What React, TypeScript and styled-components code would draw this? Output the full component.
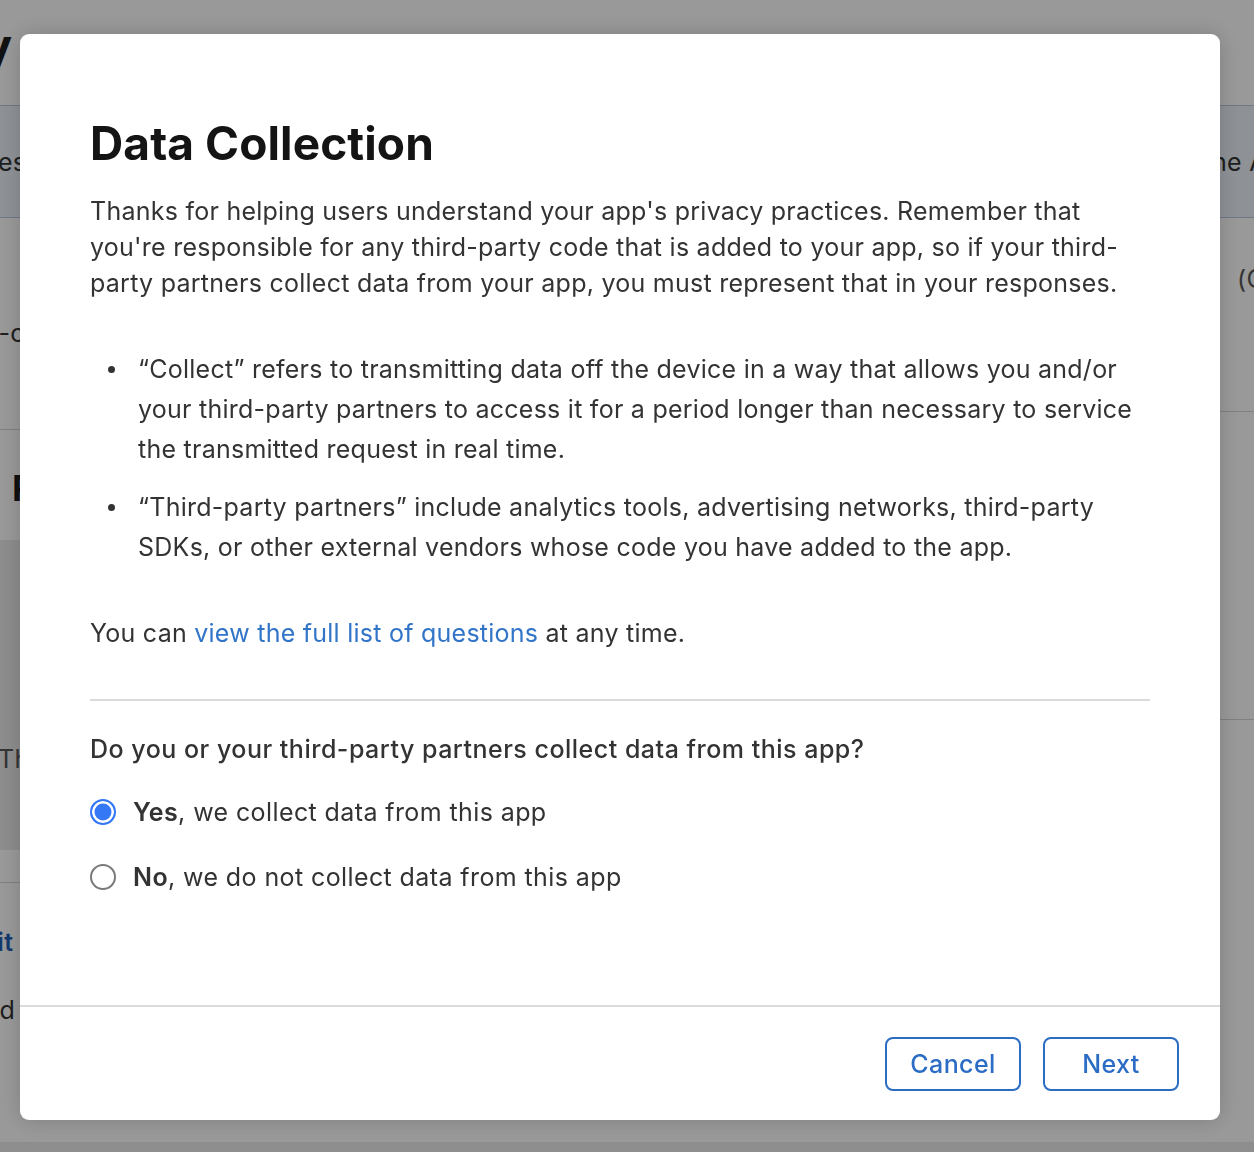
import * as React from "react";
import styled, { createGlobalStyle } from "styled-components";

const GlobalStyle = createGlobalStyle`
  html, body {
    margin: 0;
    padding: 0;
    height: 100%;
    overflow: hidden;
    background: #fff;
  }
  body {
    font-family: Inter, "Noto Sans", "Liberation Sans", sans-serif;
    -webkit-font-smoothing: antialiased;
  }
  * { box-sizing: border-box; }
`;

const App = () => {
  const [collects, setCollects] = React.useState(true);

  return (
    <>
      <GlobalStyle />
      <Page>
        <PageHeader>
          <PageTitle>App Privacy</PageTitle>
        </PageHeader>
        <TableBand>
          <BandLeft>Data Types and Values</BandLeft>
          <BandRight>the App</BandRight>
        </TableBand>
        <PageBody>
          <MainCol>
            <MainRow className="first">
              <RowText>non-consumable</RowText>
            </MainRow>
            <MainRow className="second">
              <SectionHeading>Privacy Policy</SectionHeading>
              <GreyCard>
                <CardText>The app has a policy</CardText>
              </GreyCard>
            </MainRow>
            <MainRow className="third">
              <LinkText>Edit</LinkText>
              <RowText className="small">Updated</RowText>
            </MainRow>
          </MainCol>
          <SideCol>
            <SideBlock className="top">
              <SideText>(Optional)</SideText>
            </SideBlock>
            <SideBlock className="mid" />
          </SideCol>
        </PageBody>
        <PageFooter />
      </Page>

      <Overlay />

      <Modal role="dialog" aria-labelledby="dc-title">
        <ModalBody>
          <Title id="dc-title">Data Collection</Title>
          <Paragraph>
            Thanks for helping users understand your app's privacy practices. Remember that<br />
            you're responsible for any third-party code that is added to your app, so if your third-<br />
            party partners collect data from your app, you must represent that in your responses.
          </Paragraph>
          <BulletList>
            <li>
              “Collect” refers to transmitting data off the device in a way that allows you and/or<br />
              your third-party partners to access it for a period longer than necessary to service<br />
              the transmitted request in real time.
            </li>
            <li>
              “Third-party partners” include analytics tools, advertising networks, third-party<br />
              SDKs, or other external vendors whose code you have added to the app.
            </li>
          </BulletList>
          <Paragraph>
            You can <a href="#">view the full list of questions</a> at any time.
          </Paragraph>
          <Divider />
          <Question>Do you or your third-party partners collect data from this app?</Question>
          <RadioGroup>
            <RadioRow onClick={() => setCollects(true)}>
              <Radio $checked={collects} />
              <span><b>Yes</b>, we collect data from this app</span>
            </RadioRow>
            <RadioRow onClick={() => setCollects(false)}>
              <Radio $checked={!collects} />
              <span><b>No</b>, we do not collect data from this app</span>
            </RadioRow>
          </RadioGroup>
        </ModalBody>
        <ModalFooter>
          <OutlineButton>Cancel</OutlineButton>
          <OutlineButton>Next</OutlineButton>
        </ModalFooter>
      </Modal>
    </>
  );
};

export default App;

/* ---------- page behind the dialog ---------- */

const Page = styled.div`
  width: 100%;
  height: 1152px;
  display: flex;
  flex-direction: column;
  overflow: hidden;
  color: #1d1d1f;
  font-size: 25px;
  letter-spacing: 0.3px;
`;

const PageHeader = styled.div`
  height: 105px;
  padding-top: 22px;
`;

const PageTitle = styled.h1`
  margin: 0 0 0 -272px;
  font-size: 48px;
  line-height: 48px;
  font-weight: 700;
  letter-spacing: 0;
  white-space: nowrap;
`;

const TableBand = styled.div`
  height: 113px;
  flex-shrink: 0;
  display: flex;
  justify-content: space-between;
  align-items: center;
  background: #edf3fa;
  border-top: 1px solid #b9c9dc;
  border-bottom: 1px solid #b9c9dc;
  color: #333;
  white-space: nowrap;
  overflow: hidden;
`;

const BandLeft = styled.span`
  margin-left: -250px;
`;

const BandRight = styled.span`
  margin-right: -44px;
`;

const PageBody = styled.div`
  flex: 1;
  display: flex;
`;

const MainCol = styled.div`
  flex: 1;
  display: flex;
  flex-direction: column;
`;

const MainRow = styled.div`
  border-bottom: 1px solid #d5d5d5;
  &.first {
    height: 212px;
    padding-top: 100px;
  }
  &.second {
    height: 453px;
    padding-top: 36px;
  }
  &.third {
    flex: 1;
    border-bottom: 0;
    padding-top: 44px;
  }
`;

const RowText = styled.div`
  margin-left: -47px;
  color: #333;
  white-space: nowrap;
  &.small {
    margin-left: -88px;
    margin-top: 38px;
  }
`;

const SectionHeading = styled.div`
  margin-left: 12px;
  font-size: 36px;
  font-weight: 700;
  letter-spacing: 0;
  white-space: nowrap;
`;

const GreyCard = styled.div`
  margin: 30px 0 0 -40px;
  height: 310px;
  background: #ebebeb;
  padding-top: 204px;
`;

const CardText = styled.div`
  margin-left: 38px;
  color: #555;
  white-space: nowrap;
`;

const LinkText = styled.div`
  margin-left: -34px;
  font-weight: 600;
  color: #1f5fb8;
`;

const SideCol = styled.div`
  width: 320px;
  display: flex;
  flex-direction: column;
`;

const SideBlock = styled.div`
  border-bottom: 1px solid #d5d5d5;
  &.top {
    height: 194px;
    padding: 46px 0 0 303px;
  }
  &.mid {
    height: 308px;
  }
`;

const SideText = styled.div`
  color: #555;
  white-space: nowrap;
`;

const PageFooter = styled.div`
  height: 10px;
  flex-shrink: 0;
  background: #ededed;
`;

/* ---------- dialog ---------- */

const Overlay = styled.div`
  position: fixed;
  inset: 0;
  background: rgba(0, 0, 0, 0.4);
`;

const Modal = styled.div`
  position: fixed;
  left: 20px;
  top: 34px;
  width: 1200px;
  height: 1086px;
  display: flex;
  flex-direction: column;
  background: #fff;
  border-radius: 9px;
  box-shadow: 0 0 22px rgba(0, 0, 0, 0.18);
  color: #333;
  font-size: 25px;
  letter-spacing: 0.25px;
`;

const ModalBody = styled.div`
  flex: 1;
  padding: 81px 70px 0 70px;
`;

const Title = styled.h2`
  margin: 0 0 22px;
  font-size: 46px;
  line-height: 56px;
  font-weight: 700;
  letter-spacing: 0.1px;
  color: #141414;
`;

const Paragraph = styled.p`
  margin: 0;
  line-height: 36px;
  white-space: nowrap;
  a {
    color: #3275c8;
    text-decoration: none;
  }
`;

const BulletList = styled.ul`
  margin: 48px 0 48px;
  padding: 0 0 0 48px;
  line-height: 40px;
  list-style: none;
  li {
    position: relative;
    white-space: nowrap;
  }
  li::before {
    content: "";
    position: absolute;
    left: -30px;
    top: 17px;
    width: 7px;
    height: 7px;
    border-radius: 50%;
    background: #333;
  }
  li + li {
    margin-top: 18px;
  }
`;

const Divider = styled.hr`
  margin: 48px 0 0;
  width: 1060px;
  border: 0;
  border-top: 2px solid #dadada;
`;

const Question = styled.div`
  margin-top: 30px;
  line-height: 36px;
  font-weight: 500;
  letter-spacing: 0.5px;
`;

const RadioGroup = styled.div`
  margin-top: 25px;
  display: flex;
  flex-direction: column;
  gap: 25px;
`;

const RadioRow = styled.label`
  display: flex;
  align-items: center;
  gap: 17px;
  height: 40px;
  letter-spacing: 0.4px;
  cursor: pointer;
  b {
    font-weight: 600;
  }
`;

const Radio = styled.span<{ $checked: boolean }>`
  width: 26px;
  height: 26px;
  flex-shrink: 0;
  border-radius: 50%;
  border: ${(p) => (p.$checked ? "2.5px solid #3478f6" : "2px solid #7a7a7a")};
  background: ${(p) => (p.$checked ? "#3478f6" : "#fff")};
  box-shadow: ${(p) => (p.$checked ? "inset 0 0 0 2.5px #fff" : "none")};
`;

const ModalFooter = styled.div`
  display: flex;
  justify-content: flex-end;
  gap: 22px;
  padding: 30px 41px 29px;
  border-top: 2px solid #dadada;
`;

const OutlineButton = styled.button`
  width: 136px;
  height: 54px;
  padding: 0;
  font-family: inherit;
  font-size: 25px;
  letter-spacing: 0.4px;
  font-weight: 500;
  color: #2b6cc4;
  background: #fff;
  border: 2px solid #2b6cc4;
  border-radius: 8px;
  cursor: pointer;
`;
